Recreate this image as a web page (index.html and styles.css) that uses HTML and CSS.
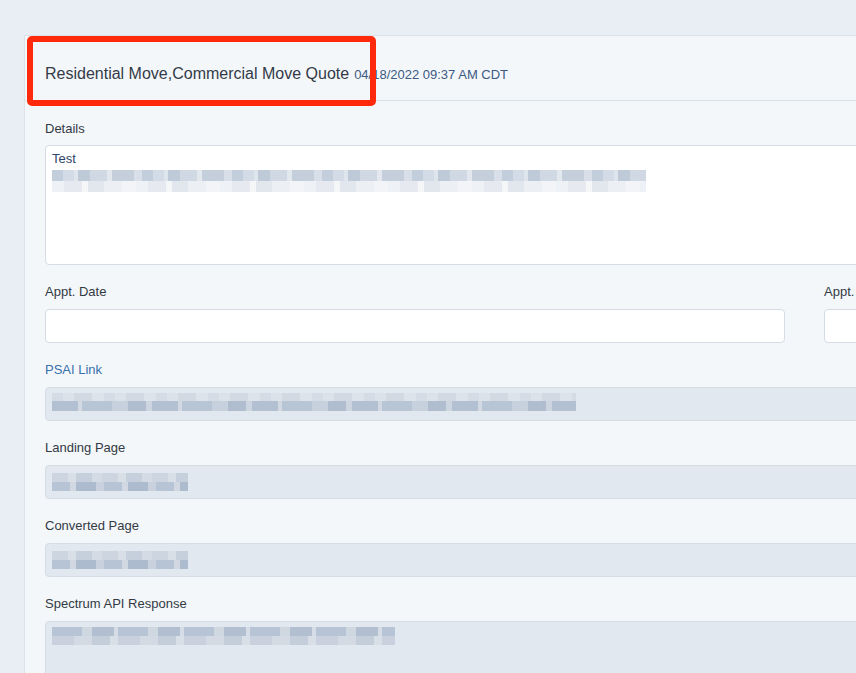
FILE: index.html
```html
<!DOCTYPE html>
<html lang="en">
<head>
<meta charset="utf-8">
<title>Lead</title>
<link rel="stylesheet" href="styles.css">
</head>
<body>
<div class="page">
  <div class="panel">
    <div class="panel-head">
      <span class="title">Residential Move,Commercial Move Quote</span>
      <span class="stamp">04/18/2022 09:37 AM CDT</span>
    </div>
    <div class="panel-body">
      <div class="group">
        <div class="label first">Details</div>
        <div class="box textarea">
          <div class="txt">Test</div>
          <div class="blur b-details"><div class="r1"></div><div class="r2"></div></div>
        </div>
      </div>
      <div class="cols">
        <div class="group">
          <div class="label">Appt. Date</div>
          <div class="box input"></div>
        </div>
        <div class="group">
          <div class="label">Appt. Time</div>
          <div class="box input"></div>
        </div>
      </div>
      <div class="group">
        <div class="label link">PSAI Link</div>
        <div class="box input ro">
          <div class="blur b-psai"><div class="r1"></div><div class="r2"></div></div>
        </div>
      </div>
      <div class="group">
        <div class="label">Landing Page</div>
        <div class="box input ro">
          <div class="blur b-short"><div class="r2"></div><div class="r1"></div></div>
        </div>
      </div>
      <div class="group">
        <div class="label">Converted Page</div>
        <div class="box input ro">
          <div class="blur b-short"><div class="r2"></div><div class="r1"></div></div>
        </div>
      </div>
      <div class="group">
        <div class="label">Spectrum API Response</div>
        <div class="box textarea ro tall">
          <div class="blur b-api"><div class="r1"></div><div class="r2"></div></div>
        </div>
      </div>
    </div>
  </div>
  <div class="annot"></div>
</div>
</body>
</html>
```

FILE: styles.css
```css
html, body {
  margin: 0;
  padding: 0;
  background: #e9eef5;
  overflow: hidden;
  width: 856px;
  height: 673px;
  font-family: "Liberation Sans", Arial, sans-serif;
}
.page {
  position: relative;
  padding: 35px 0 0 24px;
}
.panel {
  width: 1600px;
  background: #f4f7fa;
  border: 1px solid #dce2ea;
  border-right: none;
}
.panel-head {
  height: 65px;
  box-sizing: border-box;
  padding: 28px 20px 0 20px;
  border-bottom: 1px solid #d9dfe6;
  display: flex;
  align-items: baseline;
  gap: 5px;
}
.title {
  font-size: 16px;
  line-height: 20px;
  color: #333b48;
}
.stamp {
  font-size: 13px;
  color: #3b5a84;
}
.panel-body {
  padding: 18px 20px 0 20px;
}
.group {
  margin-bottom: 17px;
}
.label {
  font-size: 13px;
  line-height: 18px;
  color: #333a44;
  padding-top: 1px;
  margin-bottom: 8px;
}
.label.first {
  margin-bottom: 7px;
}
.label.link {
  color: #3870aa;
}
.cols {
  display: grid;
  grid-template-columns: 740px 740px;
  column-gap: 39px;
}
.box {
  background: #ffffff;
  border: 1px solid #d5dce4;
  border-radius: 4px;
  box-sizing: border-box;
  padding: 5px 6px;
}
.input {
  height: 34px;
}
.textarea {
  height: 120px;
}
.tall {
  height: 70px;
}
.ro {
  background: #e2e8ef;
  border-color: #d5dce4;
}
.txt {
  font-size: 13px;
  line-height: 16px;
  color: #2f4468;
}
.blur .r1, .blur .r2 {
  height: 11px;
}
.blur .r1 {
  background: repeating-linear-gradient(90deg,
    #c3cedd 0 11px, #d3dbe6 11px 22px, #dfe5ed 22px 26px,
    #bfcad9 26px 38px, #cfd8e3 38px 55px, #e3e8ef 55px 60px,
    #c5cfdc 60px 82px, #d8dfe8 82px 90px);
}
.blur .r2 {
  background: repeating-linear-gradient(90deg,
    #eef1f5 0 12px, #e6eaf0 12px 30px, #f4f6f8 30px 36px,
    #e2e7ee 36px 52px, #eceff4 52px 70px, #f2f4f7 70px 84px);
}
.b-details {
  width: 594px;
  margin-top: 3px;
}
.b-psai {
  width: 524px;
  margin-top: 0;
}
.b-psai .r1 { height: 8px; }
.b-psai .r2 { height: 10px; }
.b-psai .r1 {
  background: repeating-linear-gradient(90deg,
    #d5dce6 0 11px, #dce2ea 11px 22px, #d2d9e3 22px 40px, #dde3ea 40px 52px);
}
.b-psai .r2 {
  background: repeating-linear-gradient(90deg,
    #b3c0d1 0 26px, #d2d9e3 26px 30px, #b8c5d5 30px 60px,
    #c7d0dd 60px 76px, #afbdcf 76px 94px, #ccd5e0 94px 100px);
}
.b-short {
  width: 136px;
  margin-top: 2px;
}
.b-short .r2 { height: 9px; }
.b-short .r1 { height: 9px; }
.b-short .r2 {
  background: repeating-linear-gradient(90deg,
    #cdd5e0 0 16px, #d9dfe7 16px 24px, #c6d0dc 24px 40px, #d4dbe4 40px 50px);
}
.b-short .r1 {
  background: repeating-linear-gradient(90deg,
    #b7c4d5 0 18px, #d1d8e2 18px 24px, #adbbcf 24px 44px, #c8d1dd 44px 52px);
}
.b-api {
  width: 343px;
  margin-top: 0;
}
.b-api .r1, .b-api .r2 { height: 9px; }
.b-api .r1 {
  background: repeating-linear-gradient(90deg,
    #b7c4d5 0 30px, #cfd7e1 30px 40px, #b1bfd1 40px 62px, #d7dde6 62px 66px);
}
.b-api .r2 {
  background: repeating-linear-gradient(90deg,
    #c8d1dd 0 22px, #d3dae4 22px 40px, #c4cedb 40px 58px, #d9dfe7 58px 66px);
}
.annot {
  position: absolute;
  left: 27px;
  top: 36px;
  width: 349px;
  height: 70px;
  box-sizing: border-box;
  border: 6px solid #ff2a0c;
  border-radius: 5px;
}
```
